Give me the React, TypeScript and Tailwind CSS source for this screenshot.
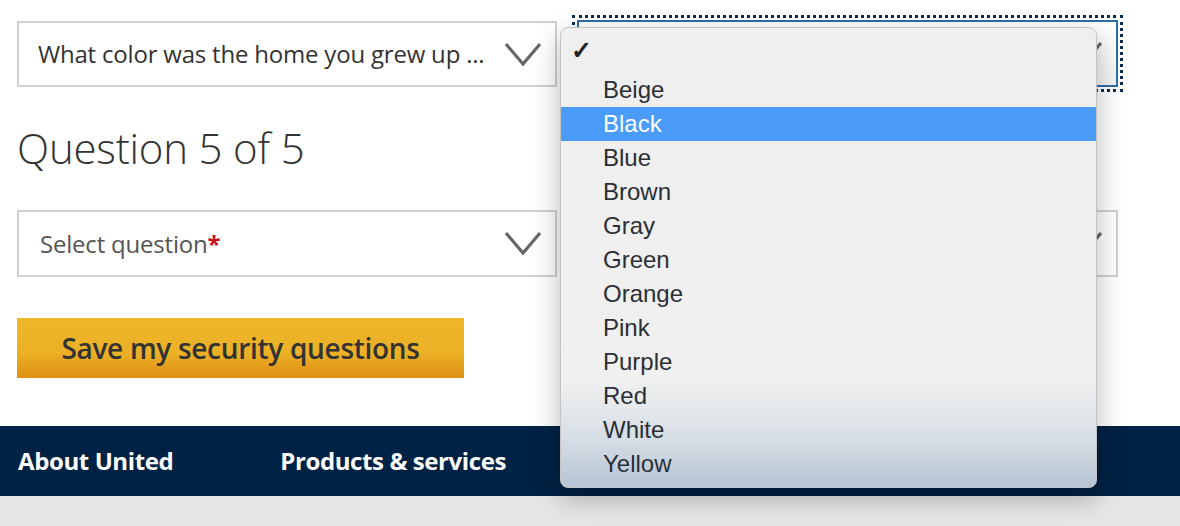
import React from 'react';

const COLORS = ['Beige', 'Black', 'Blue', 'Brown', 'Gray', 'Green', 'Orange', 'Pink', 'Purple', 'Red', 'White', 'Yellow'];

function Chevron() {
  return (
    <svg width="38" height="25" viewBox="0 0 38 25" className="shrink-0">
      <path d="M2 2 L19 22 L36 2" fill="none" stroke="#666666" strokeWidth="3.2" strokeLinejoin="miter" />
    </svg>
  );
}

export default function App() {
  return (
    <div className="w-[1180px] h-[526px] bg-white overflow-hidden flex flex-col" style={{ fontFamily: '"Open Sans", sans-serif' }}>
      <div className="flex-1 px-[17px] pt-[21px]">
        {/* row 1 */}
        <div className="flex gap-5">
          <div className="w-[540px] h-[66px] border-2 border-[#d0d0d0] flex items-center justify-between pl-[19px] pr-[13px]">
            <span className="text-[24px] text-[#333333] tracking-[-0.2px]">What color was the home you grew up ...</span>
            <Chevron />
          </div>
          <div className="relative w-[541px] h-[67px] -mt-px border-2 border-[#2d6cab] outline-[3px] outline-dotted outline-[#0b2c52] outline-offset-[2px] flex items-center justify-end pr-[13px] bg-[linear-gradient(to_bottom,#ffffff,#f4f4f4)]">
            <Chevron />
            {/* open dropdown list */}
            <div className="absolute left-[-19px] top-[5px] w-[537px] h-[461px] rounded-[8px] border border-[#c4c4c4] shadow-[0_10px_28px_rgba(0,0,0,0.28)] bg-[linear-gradient(to_bottom,#efefef_0%,#f0f0f0_76%,#e3e7eb_84%,#ccd5df_93%,#b5c4d5_100%)] pt-[5px] pb-[7px] overflow-hidden z-10" style={{ fontFamily: '"Liberation Sans", Arial, sans-serif' }}>
              <div className="h-[40px] flex items-center pb-[4px] pl-[10px] text-[25px] text-[#222222] font-bold">✓</div>
              {COLORS.map((c) => (
                <div
                  key={c}
                  className={
                    c === 'Black'
                      ? 'h-[34px] flex items-center pl-[42px] text-[24px] bg-[#4b9bf9] text-white'
                      : 'h-[34px] flex items-center pl-[42px] text-[24px] text-[#2b2f36]'
                  }
                >
                  {c}
                </div>
              ))}
            </div>
          </div>
        </div>

        <h2 className="mt-[33px] text-[42px] font-light text-[#333333] leading-[56px] tracking-[-0.2px]">Question 5 of 5</h2>

        {/* row 2 */}
        <div className="flex gap-5 mt-[34px]">
          <div className="w-[540px] h-[67px] border-2 border-[#d0d0d0] flex items-center justify-between pl-[21px] pr-[13px]">
            <span className="text-[24px] text-[#555555] tracking-[-0.2px]">
              Select question<span className="text-[#cc0f1f] font-bold">*</span>
            </span>
            <Chevron />
          </div>
          <div className="w-[541px] h-[67px] border-2 border-[#d0d0d0] flex items-center justify-end pr-[13px]">
            <Chevron />
          </div>
        </div>

        <button className="mt-[41px] w-[447px] h-[60px] bg-[linear-gradient(to_bottom,#efb72a_0%,#ebb026_60%,#df8f13_100%)] text-[28px] font-semibold text-[#333333] flex items-center justify-center tracking-[-0.3px]">
          Save my security questions
        </button>
      </div>

      <div className="h-[70px] bg-[#002244] flex items-center px-[18px] gap-[107px] text-white text-[24px] font-bold tracking-[-0.4px]">
        <span>About United</span>
        <span>Products &amp; services</span>
      </div>
      <div className="h-[30px] bg-[#e6e6e6]" />
    </div>
  );
}
